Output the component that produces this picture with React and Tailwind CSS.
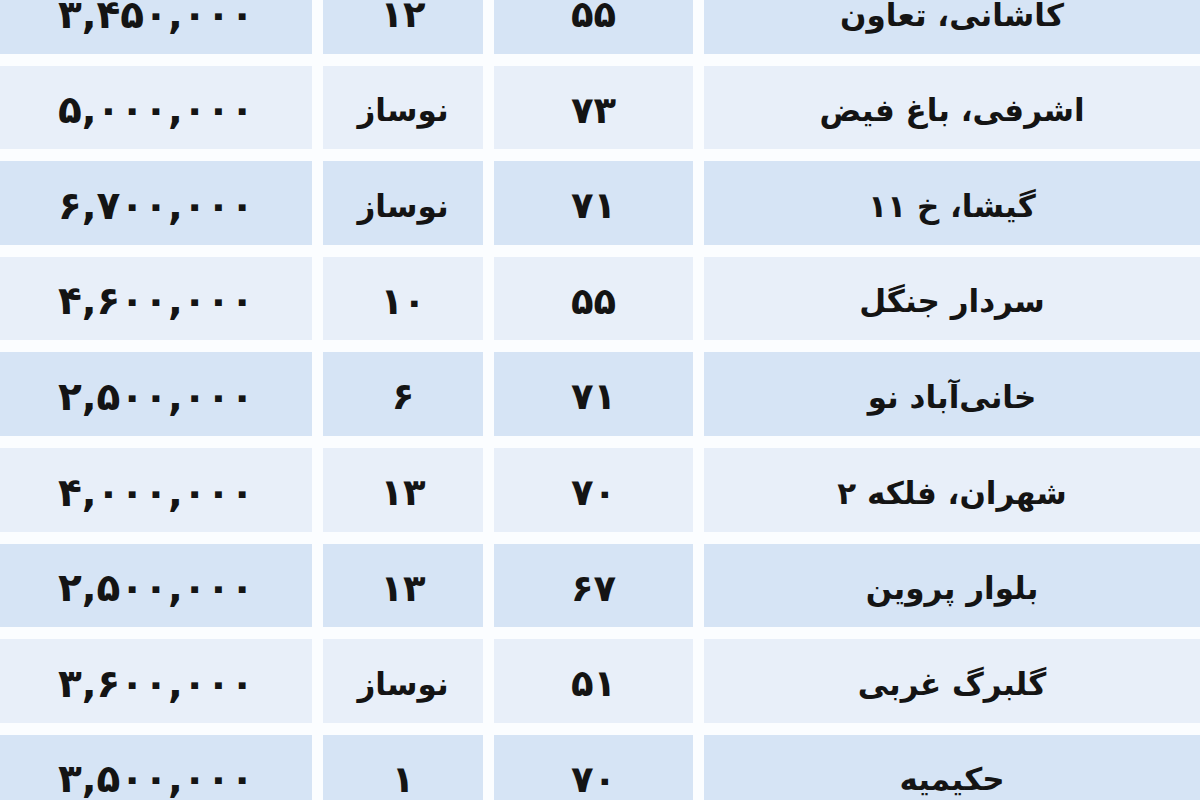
const rows = [
  { price: "۳,۴۵۰,۰۰۰", age: "۱۲", area: "۵۵", place: "کاشانی، تعاون" },
  { price: "۵,۰۰۰,۰۰۰", age: "نوساز", area: "۷۳", place: "اشرفی، باغ فیض" },
  { price: "۶,۷۰۰,۰۰۰", age: "نوساز", area: "۷۱", place: "گیشا، خ ۱۱" },
  { price: "۴,۶۰۰,۰۰۰", age: "۱۰", area: "۵۵", place: "سردار جنگل" },
  { price: "۲,۵۰۰,۰۰۰", age: "۶", area: "۷۱", place: "خانی‌آباد نو" },
  { price: "۴,۰۰۰,۰۰۰", age: "۱۳", area: "۷۰", place: "شهران، فلکه ۲" },
  { price: "۲,۵۰۰,۰۰۰", age: "۱۳", area: "۶۷", place: "بلوار پروین" },
  { price: "۳,۶۰۰,۰۰۰", age: "نوساز", area: "۵۱", place: "گلبرگ غربی" },
  { price: "۳,۵۰۰,۰۰۰", age: "۱", area: "۷۰", place: "حکیمیه" },
];

const isWord = (s) => /[\u0621-\u064A\u067E-\u06CC]/.test(s);

function Cell({ children, dark, kind }) {
  let text = "text-[31px]";
  if (kind === "price") text = "text-[39px] tracking-[5px]";
  if (kind === "num") text = isWord(children) ? "text-[31px]" : "text-[37px] tracking-[9px]";
  return (
    <div
      dir="rtl"
      className={`flex items-center justify-center pt-[6px] ${text} ${
        dark ? "bg-[#d6e4f5]" : "bg-[#e8eff9]"
      }`}
    >
      {children}
    </div>
  );
}

export default function App() {
  return (
    <div className="h-[800px] w-[1200px] overflow-hidden bg-[#fbfdff]">
      {/* price | age | area | location */}
      <div className="-mt-[30px] grid grid-cols-[312px_160px_199px_1fr] auto-rows-[83.6px] gap-x-[11px] gap-y-[12px] font-['DejaVu_Sans',sans-serif] font-bold text-[#141414]">
        {rows.map((r, i) => {
          const dark = i % 2 === 0;
          return [
            <Cell key={i + "p"} dark={dark} kind="price">{r.price}</Cell>,
            <Cell key={i + "a"} dark={dark} kind="num">{r.age}</Cell>,
            <Cell key={i + "m"} dark={dark} kind="num">{r.area}</Cell>,
            <Cell key={i + "l"} dark={dark} kind="place">{r.place}</Cell>,
          ];
        })}
      </div>
    </div>
  );
}
